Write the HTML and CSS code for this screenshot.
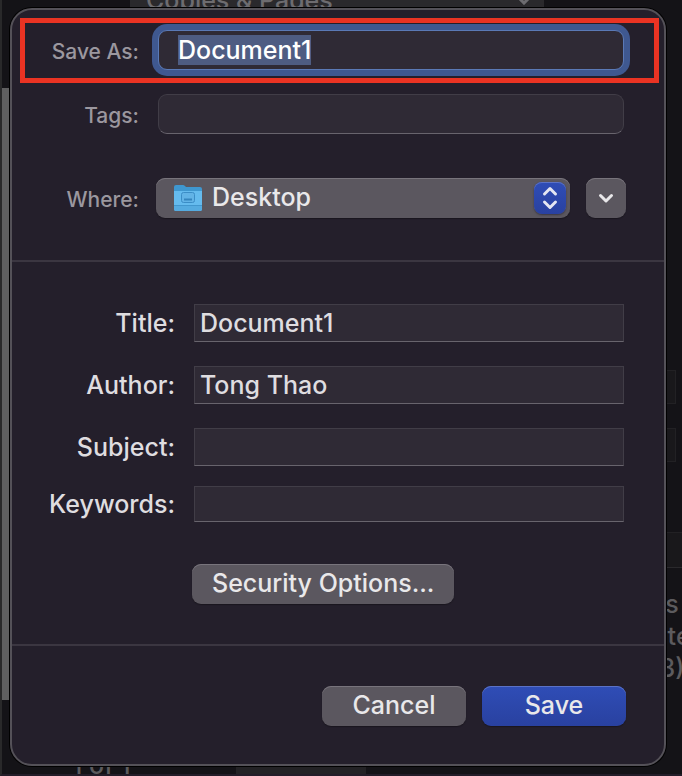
FILE: index.html
```html
<!DOCTYPE html>
<html lang="en">
<head>
  <meta charset="UTF-8">
  <meta name="viewport" content="width=device-width, initial-scale=1.0">
  <title>Save As</title>
  <link rel="stylesheet" href="styles.css">
</head>
<body>
  <!-- Dimmed print window behind the dialog -->
  <div class="backdrop" aria-hidden="true">
    <div class="page-preview"></div>
    <div class="section-bar">
      <span>Copies &amp; Pages</span>
      <svg width="16" height="10" viewBox="0 0 16 10"><path d="M2 2l6 6 6-6" fill="none" stroke="#6d6c70" stroke-width="3" stroke-linecap="round"/></svg>
    </div>
    <div class="side-field side-field-first"></div>
    <div class="side-field side-field-second"></div>
    <div class="side-panel"></div>
    <div class="side-text">s<br>ate<br>3)</div>
    <span class="page-count">1 of 1</span>
    <div class="page-button"></div>
  </div>

  <form class="dialog">
    <!-- File name and location -->
    <div class="row save-row">
      <label for="save-as">Save As:</label>
      <input id="save-as" class="round-field" type="text" value="Document1" autocomplete="off" spellcheck="false" autofocus>
    </div>
    <div class="row location-row">
      <label for="tags">Tags:</label>
      <input id="tags" class="round-field" type="text">
    </div>
    <div class="row location-row where-row">
      <label for="where">Where:</label>
      <div class="where-controls">
        <div class="where-select">
          <select id="where">
            <option>Desktop</option>
          </select>
          <svg class="folder-icon" width="30" height="28" viewBox="0 0 30 28">
            <path d="M1 3q0-2 2-2h7q1 0 2 1l1 1h14q2 0 2 2v9H1z" fill="#3f97cf"/>
            <path d="M1 7h28v18q0 2-2 2H3q-2 0-2-2z" fill="#65bbee"/>
            <path d="M1 21h28v4q0 2-2 2H3q-2 0-2-2z" fill="#55abe0"/>
            <path d="M1 21.500h28" stroke="#4297ce"/>
            <rect x="8.500" y="8.500" width="13" height="10" rx="2" fill="#62b3e6" stroke="#3b8dc6"/>
            <path d="M11 15.500h8" stroke="#3585be" stroke-width="2"/>
          </svg>
          <span class="stepper">
            <svg width="32" height="32" viewBox="0 0 32 32"><path d="M10.500 12l5.500-5.500 5.500 5.500M10.500 20l5.500 5.500 5.500-5.500" fill="none" stroke="#e4e6f2" stroke-width="3" stroke-linecap="round" stroke-linejoin="round"/></svg>
          </span>
        </div>
        <button type="button" class="expand-button" aria-label="Show more locations">
          <svg width="16" height="12" viewBox="0 0 16 12"><path d="M2.500 3.500l5.500 5.500 5.500-5.500" fill="none" stroke="#e9e8ea" stroke-width="3" stroke-linecap="round" stroke-linejoin="round"/></svg>
        </button>
      </div>
    </div>

    <!-- Document properties -->
    <div class="properties">
      <div class="row">
        <label for="title">Title:</label>
        <input id="title" type="text" value="Document1">
      </div>
      <div class="row">
        <label for="author">Author:</label>
        <input id="author" type="text" value="Tong Thao">
      </div>
      <div class="row">
        <label for="subject">Subject:</label>
        <input id="subject" type="text">
      </div>
      <div class="row keywords-row">
        <label for="keywords">Keywords:</label>
        <input id="keywords" type="text">
      </div>
      <button type="button" class="security-button">Security Options...</button>
    </div>

    <div class="actions">
      <button type="button">Cancel</button>
      <button type="submit" class="primary">Save</button>
    </div>
  </form>

  <script src="script.js"></script>
</body>
</html>
```
FILE: styles.css
```css
* {
  box-sizing: border-box;
}

body {
  margin: 0;
  padding: 8px 16px 10px 10px;
  position: relative;
  overflow: hidden;
  font-family: Inter, "Liberation Sans", sans-serif;
  font-size: 25px;
  font-weight: 500;
  background-color: #141317;
  color: #dfdde0;
}

/* Window behind the dialog */
.backdrop {
  position: absolute;
  inset: 0;
  overflow: hidden;
  border-left: 2px solid #29292a;
  border-bottom: 2px solid #231d29;
  color: #5c5b5e;
}

.page-preview {
  position: absolute;
  top: 88px;
  bottom: 74px;
  left: 0;
  width: 20px;
  background-color: #5f5f60;
}

.section-bar {
  position: absolute;
  top: -20px;
  left: 128px;
  right: 138px;
  height: 40px;
  display: flex;
  align-items: center;
  justify-content: space-between;
  padding: 0 12px 0 16px;
  background-color: #2a292c;
  color: #6d6c70;
}

.side-field {
  position: absolute;
  right: 6px;
  width: 40px;
  height: 34px;
  border: 1px solid #222124;
  background-color: #19181b;
}

.side-field-first {
  top: 370px;
}

.side-field-second {
  top: 428px;
}

.side-panel {
  position: absolute;
  top: 532px;
  right: 0;
  width: 40px;
  height: 36px;
  border-top: 1px solid #222124;
  border-bottom: 1px solid #2a292c;
  background-color: #19181b;
}

.side-text {
  position: absolute;
  top: 588px;
  right: -12px;
  width: 44px;
  line-height: 32px;
  text-align: center;
}

.page-count {
  position: absolute;
  bottom: -6px;
  left: 70px;
}

.page-button {
  position: absolute;
  bottom: 0;
  left: 234px;
  width: 130px;
  height: 20px;
  background-color: #232225;
}

/* Dialog */
.dialog {
  position: relative;
  border: 2px solid #545158;
  border-radius: 22px;
  padding-top: 8px;
  background-color: #241f2b;
  box-shadow: 0 0 0 1px #000;
}

.row {
  display: flex;
  align-items: center;
  gap: 19px;
}

.row label {
  flex: none;
  width: 163px;
  text-align: right;
}

input {
  flex: 1;
  min-width: 0;
  height: 38px;
  padding: 0 5px;
  border: 1px solid #413d47;
  border-bottom-color: #68646d;
  border-radius: 0;
  outline: none;
  background-color: #2f2a35;
  color: #dfdde0;
  font: inherit;
  line-height: 32px;
}

.round-field {
  height: 40px;
  padding: 0 19px;
  border-radius: 9px;
}

/* Highlighted file name row */
.save-row {
  margin: 0 5px 0 8px;
  border: 5px solid #ea3323;
  padding: 7px 30px 8px 0;
}

.save-row label,
.location-row label {
  width: 127px;
  padding-top: 2px;
  font-size: 21px;
  color: #9b979f;
}

.save-row label {
  width: 114px;
}

#save-as {
  border-color: #5a79b6;
  box-shadow: 0 0 0 6px #3f5890;
  color: #fff;
  caret-color: transparent;
}

#save-as::selection {
  background-color: #4e5c82;
  color: #fff;
}

.location-row {
  margin-top: 11px;
  padding-right: 40px;
}

.where-row {
  margin-top: 44px;
  padding-right: 38px;
  gap: 17px;
}

.where-controls {
  flex: 1;
  display: flex;
  gap: 16px;
}

.where-select {
  position: relative;
  flex: 1;
}

select,
button {
  height: 40px;
  border: none;
  border-radius: 9px;
  padding: 0 0 2px;
  background-color: #5b575f;
  box-shadow: inset 0 1px #78747c, 0 1px 1px #1a161f;
  color: #e9e8ea;
  font: inherit;
}

select {
  appearance: none;
  display: block;
  width: 100%;
  padding: 0 48px 2px 56px;
}

.folder-icon {
  position: absolute;
  top: 6px;
  left: 17px;
}

.stepper {
  position: absolute;
  top: 4px;
  right: 4px;
  width: 32px;
  height: 32px;
  border-radius: 8px;
  background: linear-gradient(#2f4db6, #2941a0);
  box-shadow: inset 0 1px #5b72c6, 0 1px 2px #3a3640;
  pointer-events: none;
}

.stepper svg {
  display: block;
}

.expand-button {
  display: flex;
  align-items: center;
  justify-content: center;
  width: 40px;
  padding: 0;
}

/* Document properties */
.properties {
  display: flex;
  flex-direction: column;
  gap: 24px;
  margin-top: 42px;
  padding: 42px 40px 40px 0;
  border-top: 2px solid #3b3641;
  border-bottom: 2px solid #3b3641;
}

.keywords-row {
  margin-top: -4px;
}

.keywords-row input {
  height: 36px;
}

.security-button {
  align-self: flex-start;
  margin: 18px 0 0 180px;
  padding: 0 20px 2px;
}

/* Dialog buttons */
.actions {
  display: flex;
  justify-content: flex-end;
  gap: 16px;
  padding: 40px 38px 38px;
}

.actions button {
  width: 144px;
}

.actions .primary {
  background: linear-gradient(#2f4db6, #2941a0);
  box-shadow: inset 0 1px #5b72c6, 0 1px 1px #1a161f;
}
```
FILE: script.js
```js
// Select the suggested file name so it can be typed over
const saveAs = document.getElementById('save-as');
saveAs.focus();
saveAs.select();
```
